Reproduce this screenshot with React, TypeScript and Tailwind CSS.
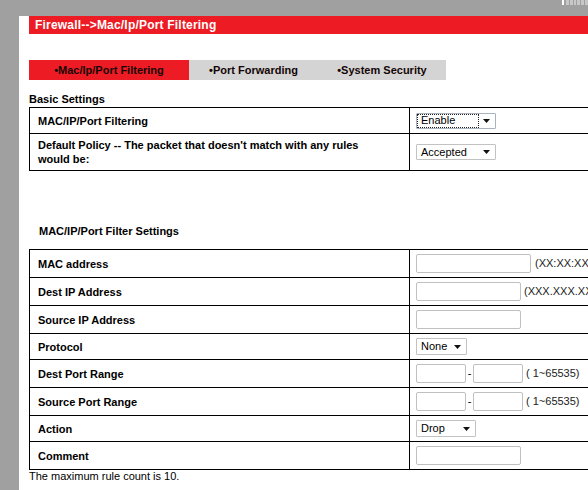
import React from "react";

const FONT = "font-['Liberation_Sans',Arial,Helvetica,sans-serif]";

function Arrow() {
  return (
    <svg width="7" height="4" viewBox="0 0 7 4" className="shrink-0">
      <path d="M0 0h7L3.5 4z" fill="#111" />
    </svg>
  );
}

function Select({ value, width, height, focused }: { value: string; width: string; height: string; focused?: boolean }) {
  return (
    <div
      className={`flex items-center justify-between bg-white border rounded-[1px] pr-[5px] ${width} ${height} ${
        focused ? "border-[#a9b3bf]" : "border-[#c2c2c2]"
      }`}
    >
      {focused ? (
        <span className="flex items-center h-full w-[62px] pl-[3px] border border-dotted border-[#222] leading-none">
          {value}
        </span>
      ) : (
        <span className="pl-[4px] leading-none">{value}</span>
      )}
      <Arrow />
    </div>
  );
}

function TextInput({ width }: { width: string }) {
  return <div className={`h-[19px] bg-white border border-[#c0c0c0] rounded-[2px] ${width}`} />;
}

function Row({ label, h, children }: { label: React.ReactNode; h: string; children?: React.ReactNode }) {
  return (
    <div className={`flex border-b border-black last:border-b-0 ${h}`}>
      <div className="w-[379px] shrink-0 flex items-center pl-[8px] font-bold leading-[14px]">{label}</div>
      <div className="flex-1 border-l border-black flex items-center pl-[6px] font-normal">{children}</div>
    </div>
  );
}

function PortRange() {
  return (
    <div className="flex items-center">
      <TextInput width="w-[50px]" />
      <span className="w-[7px] text-center">-</span>
      <TextInput width="w-[50px]" />
      <span className="ml-[3px] text-[#222]">( 1~65535)</span>
    </div>
  );
}

export default function App() {
  return (
    <div className={`w-[588px] h-[490px] overflow-hidden bg-[#a0a0a0] text-[11px] text-black ${FONT}`}>
      {/* top band */}
      <div className="h-[16px] flex justify-end items-start pr-0">
        <div className="flex gap-[2px] mr-0">
          <div className="w-[2px] h-[5px] bg-white" />
          <div className="flex gap-[1px] h-[5px] w-[22px] overflow-hidden">
            <div className="w-[3px] bg-[#c8c8c8]" />
            <div className="w-[3px] bg-[#c8c8c8]" />
            <div className="w-[3px] bg-[#c8c8c8]" />
            <div className="w-[3px] bg-[#c8c8c8]" />
            <div className="w-[3px] bg-[#c8c8c8]" />
            <div className="w-[3px] bg-[#c8c8c8]" />
          </div>
        </div>
      </div>

      <div className="ml-[19px] h-[474px] bg-white pl-[10px] overflow-hidden">
        <div className="h-[18px] bg-[#ed1c24] text-white font-bold text-[12px] tracking-[0.2px] pl-[6px] leading-[18px] whitespace-nowrap">
          Firewall--&gt;Mac/Ip/Port Filtering
        </div>

        {/* tabs */}
        <div className="mt-[26px] flex h-[20px] font-bold text-[#140606] leading-[20px] whitespace-nowrap">
          <div className="w-[160px] bg-[#ed1c24] text-center">•Mac/Ip/Port Filtering</div>
          <div className="w-[129px] bg-[#d4d4d4] text-center">•Port Forwarding</div>
          <div className="w-[128px] bg-[#d4d4d4] text-center">•System Security</div>
        </div>

        <div className="mt-[13px] mb-[1px] font-bold leading-[13px]">Basic Settings</div>
        <div className="w-[600px] border border-black">
          <Row label="MAC/IP/Port Filtering" h="h-[26px]">
            <Select value="Enable" width="w-[80px]" height="h-[16px]" focused />
          </Row>
          <Row
            label={
              <span>
                Default Policy -- The packet that doesn&apos;t match with any rules
                <br />
                would be:
              </span>
            }
            h="h-[36px]"
          >
            <Select value="Accepted" width="w-[80px]" height="h-[16px]" />
          </Row>
        </div>

        <div className="mt-[54px] mb-[11px] pl-[10px] font-bold leading-[13px]">MAC/IP/Port Filter Settings</div>
        <div className="w-[600px] border border-black">
          <Row label="MAC address" h="h-[28px]">
            <TextInput width="w-[115px]" />
            <span className="ml-[4px] text-[#222]">(XX:XX:XX:XX:XX:XX)</span>
          </Row>
          <Row label="Dest IP Address" h="h-[28px]">
            <TextInput width="w-[105px]" />
            <span className="ml-[3px] text-[#222]">(XXX.XXX.XXX.XXX)</span>
          </Row>
          <Row label="Source IP Address" h="h-[28px]">
            <TextInput width="w-[105px]" />
          </Row>
          <Row label="Protocol" h="h-[26px]">
            <Select value="None" width="w-[51px]" height="h-[17px]" />
          </Row>
          <Row label="Dest Port Range" h="h-[28px]">
            <PortRange />
          </Row>
          <Row label="Source Port Range" h="h-[28px]">
            <PortRange />
          </Row>
          <Row label="Action" h="h-[26px]">
            <Select value="Drop" width="w-[60px]" height="h-[17px]" />
          </Row>
          <Row label="Comment" h="h-[27px]">
            <TextInput width="w-[105px]" />
          </Row>
        </div>
        <div className="leading-[13px]">The maximum rule count is 10.</div>
      </div>
    </div>
  );
}
